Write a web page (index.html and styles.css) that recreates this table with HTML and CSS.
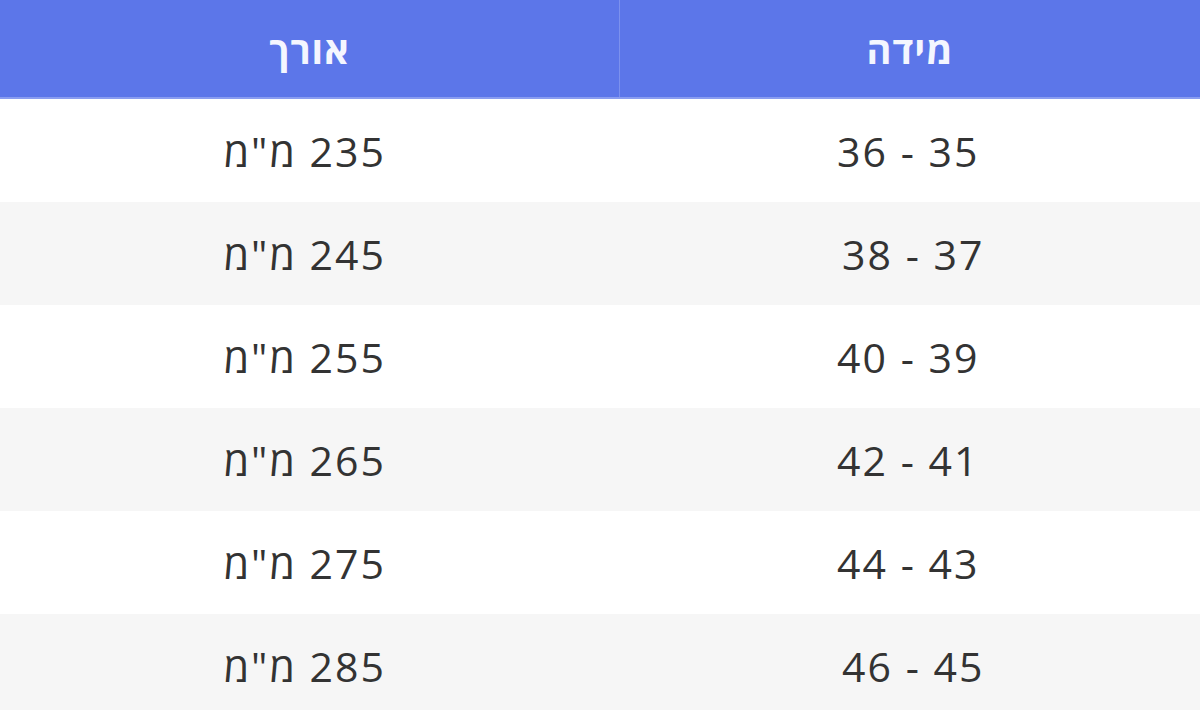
FILE: index.html
```html
<!DOCTYPE html>
<html lang="he" dir="rtl">
<head>
<meta charset="utf-8">
<link rel="stylesheet" href="styles.css">
</head>
<body>
<table class="size-table">
  <thead>
    <tr><th>מידה</th><th>אורך</th></tr>
  </thead>
  <tbody>
    <tr><td class="size">35 - 36</td><td class="length">235 מ"מ</td></tr>
    <tr><td class="size nudge">37 - 38</td><td class="length">245 מ"מ</td></tr>
    <tr><td class="size">39 - 40</td><td class="length">255 מ"מ</td></tr>
    <tr><td class="size">41 - 42</td><td class="length">265 מ"מ</td></tr>
    <tr><td class="size">43 - 44</td><td class="length">275 מ"מ</td></tr>
    <tr><td class="size nudge">45 - 46</td><td class="length">285 מ"מ</td></tr>
  </tbody>
</table>
</body>
</html>
```
FILE: styles.css
```css
html, body {
  margin: 0;
  padding: 0;
  background: #ffffff;
}
body {
  font-family: "Open Sans", "DejaVu Sans", sans-serif;
  overflow: hidden;
}
.size-table {
  width: 1200px;
  border-collapse: collapse;
  table-layout: fixed;
}
.size-table th {
  background: #5c76e9;
  color: #f4f6ff;
  font-weight: 700;
  font-size: 38px;
  letter-spacing: 1px;
  height: 97px;
  padding: 0;
  text-align: center;
  border-bottom: 2px solid #8a9df0;
}
.size-table th:first-child {
  width: 580px;
  border-left: 1px solid #7c91ee;
}
.size-table td {
  font-size: 41px;
  letter-spacing: 2px;
  color: #333333;
  height: 103px;
  padding: 0;
  text-align: center;
}
.size-table td.size {
  padding-right: 3px;
}
.size-table td.size.nudge {
  padding-right: 0;
  padding-left: 7px;
}
.size-table td.length {
  padding-right: 10px;
}
.size-table tbody tr:nth-child(even) td {
  background: #f6f6f6;
}
```
